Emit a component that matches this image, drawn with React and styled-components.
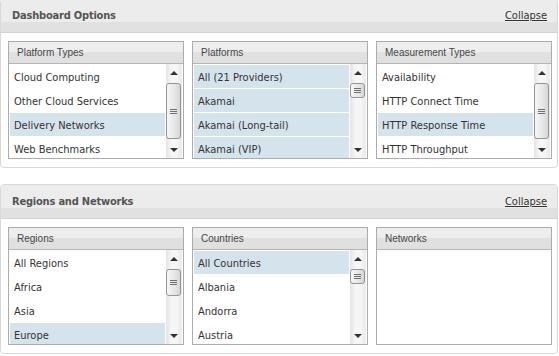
import React from "react";
import styled, { createGlobalStyle } from "styled-components";

const GlobalStyle = createGlobalStyle`
  html, body {
    margin: 0;
    padding: 0;
    background: #ffffff;
  }
  body {
    font-family: "DejaVu Sans Condensed", "DejaVu Sans", sans-serif;
    font-stretch: condensed;
  }
`;

const sections = [
  {
    title: "Dashboard Options",
    lists: [
      {
        title: "Platform Types",
        items: ["Cloud Computing", "Other Cloud Services", "Delivery Networks", "Web Benchmarks"],
        selected: [2],
        thumb: 56,
      },
      {
        title: "Platforms",
        items: ["All (21 Providers)", "Akamai", "Akamai (Long-tail)", "Akamai (VIP)"],
        selected: [0, 1, 2, 3],
        thumb: 15,
      },
      {
        title: "Measurement Types",
        items: ["Availability", "HTTP Connect Time", "HTTP Response Time", "HTTP Throughput"],
        selected: [2],
        thumb: 56,
      },
    ],
  },
  {
    title: "Regions and Networks",
    lists: [
      {
        title: "Regions",
        items: ["All Regions", "Africa", "Asia", "Europe"],
        selected: [3],
        thumb: 27,
      },
      {
        title: "Countries",
        items: ["All Countries", "Albania", "Andorra", "Austria"],
        selected: [0],
        thumb: 15,
      },
      {
        title: "Networks",
        items: [],
        selected: [],
        thumb: 0,
      },
    ],
  },
];

function ListBox({ list }) {
  return (
    <Box>
      <BoxHeader>{list.title}</BoxHeader>
      <BoxBody>
        <Items>
          {list.items.map((item, idx) => (
            <Item key={idx} $selected={list.selected.includes(idx)}>
              {item}
            </Item>
          ))}
        </Items>
        {list.thumb > 0 && (
          <Scrollbar>
            <ArrowButton>
              <Arrow $dir="up" />
            </ArrowButton>
            <Track>
              <Thumb $height={list.thumb}>
                <Grip />
              </Thumb>
            </Track>
            <ArrowButton>
              <Arrow $dir="down" />
            </ArrowButton>
          </Scrollbar>
        )}
      </BoxBody>
    </Box>
  );
}

export default function App() {
  return (
    <Page>
      <GlobalStyle />
      {sections.map((section, idx) => (
        <Panel key={idx}>
          <PanelHeader>
            <PanelTitle>{section.title}</PanelTitle>
            <CollapseLink href="#">Collapse</CollapseLink>
          </PanelHeader>
          <PanelBody>
            {section.lists.map((list, i) => (
              <ListBox key={i} list={list} />
            ))}
          </PanelBody>
        </Panel>
      ))}
    </Page>
  );
}

const Page = styled.div`
  width: 559px;
  height: 356px;
  overflow: hidden;
`;

const Panel = styled.section`
  width: 556px;
  border: 1px solid #d8d8d8;
  border-radius: 4px;
  background: #ffffff;
  overflow: hidden;
  margin-bottom: 16px;

  &:first-child {
    margin-top: -2px;
  }
`;

const PanelHeader = styled.div`
  display: flex;
  justify-content: space-between;
  align-items: flex-start;
  height: 23px;
  padding: 10px 10px 0 11px;
  background: linear-gradient(#ececec 0, #ececec 23px, #e1e1e1 23px, #e1e1e1 33px);
  border-bottom: 1px solid #d2d2d2;
`;

const PanelTitle = styled.h2`
  margin: 0;
  font-size: 11px;
  line-height: 14px;
  font-weight: bold;
  letter-spacing: -0.2px;
  color: #555555;
`;

const CollapseLink = styled.a`
  font-size: 11px;
  line-height: 14px;
  color: #333333;
  text-decoration: underline;
`;

const PanelBody = styled.div`
  display: flex;
  gap: 8px;
  padding: 8px 5px 8px 7px;
`;

const Box = styled.div`
  width: 176px;
  height: 118px;
  box-sizing: border-box;
  border: 1px solid #ababab;
  display: flex;
  flex-direction: column;
  background: #ffffff;
`;

const BoxHeader = styled.div`
  height: 21px;
  flex-shrink: 0;
  padding-left: 8px;
  border-bottom: 1px solid #b4b4b4;
  background: linear-gradient(#ededed 0, #ededed 10px, #e0e0e0 10px, #e0e0e0 21px);
  font-family: "Liberation Sans", Arial, sans-serif;
  font-size: 10px;
  line-height: 22px;
  color: #464646;
  overflow: hidden;
`;

const BoxBody = styled.div`
  flex: 1;
  display: flex;
  min-height: 0;
`;

const Items = styled.div`
  flex: 1;
  padding: 1px;
  overflow: hidden;
`;

const Item = styled.div`
  height: 23px;
  margin-bottom: 1px;
  padding-left: 4px;
  line-height: 25px;
  font-size: 11px;
  color: #333333;
  white-space: nowrap;
  overflow: hidden;
  background: ${(p) => (p.$selected ? "#d5e3ec" : "transparent")};
`;

const Scrollbar = styled.div`
  width: 16px;
  margin-right: 1px;
  display: flex;
  flex-direction: column;
  background: linear-gradient(to right, #e4e4e4, #f6f6f6 35%, #f6f6f6 65%, #eaeaea);
`;

const ArrowButton = styled.div`
  height: 17px;
  flex-shrink: 0;
  display: flex;
  align-items: center;
  justify-content: center;
`;

const Arrow = styled.span`
  width: 0;
  height: 0;
  border-left: 4px solid transparent;
  border-right: 4px solid transparent;
  ${(p) =>
    p.$dir === "up"
      ? "border-bottom: 4px solid #333333;"
      : "border-top: 4px solid #333333;"}
`;

const Track = styled.div`
  flex: 1;
  padding-top: 2px;
`;

const Thumb = styled.div`
  width: 13px;
  height: ${(p) => p.$height - 2}px;
  border: 1px solid #959595;
  border-radius: 3px;
  background: linear-gradient(to right, #f7f7f7, #e6e6e6 60%, #d6d6d6);
  display: flex;
  align-items: center;
  justify-content: center;
`;

const Grip = styled.span`
  width: 7px;
  height: 5px;
  background: repeating-linear-gradient(#707070 0, #707070 1px, transparent 1px, transparent 2px);
`;
